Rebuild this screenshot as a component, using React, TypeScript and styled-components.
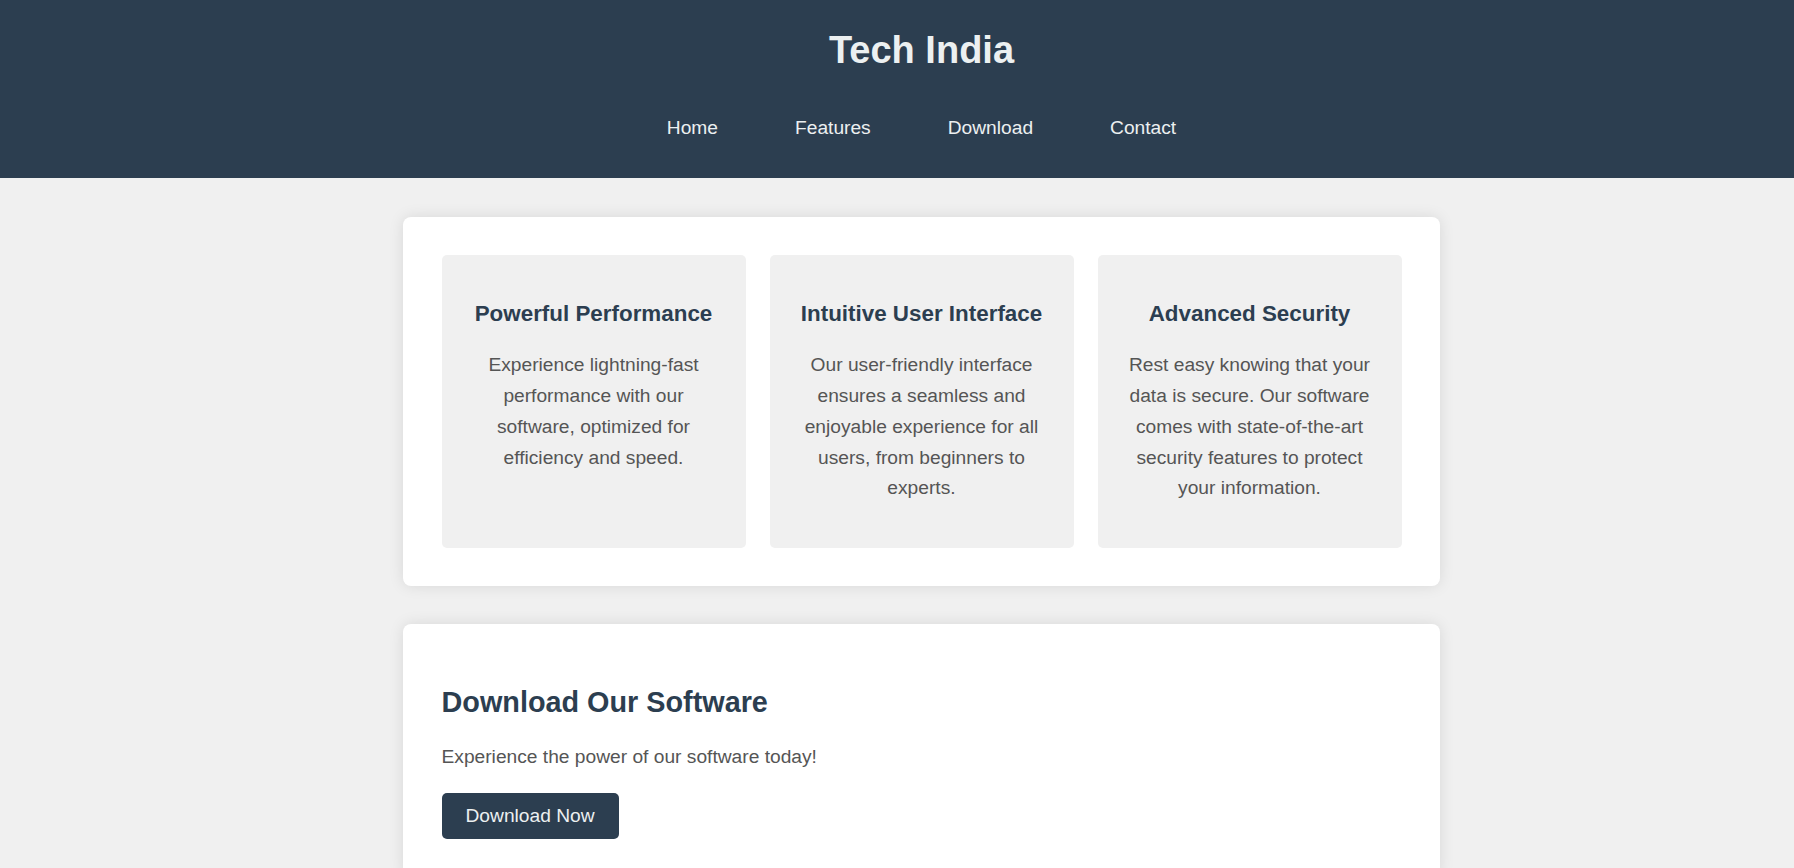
import React from "react";
import styled, { createGlobalStyle } from "styled-components";

const GlobalStyle = createGlobalStyle`
  html, body {
    margin: 0;
    padding: 0;
  }
  body {
    background: #f0f0f0;
    font-family: "Liberation Sans", Arial, sans-serif;
    color: #444;
  }
`;

const Header = styled.header`
  width: 100%;
  box-sizing: content-box;
  padding: 27px 24.5px 39px;
  background: #2c3e50;
  display: flex;
  flex-direction: column;
  align-items: center;
`;

const Title = styled.h1`
  margin: 0;
  font-size: 38px;
  line-height: 46px;
  font-weight: 700;
  color: #ecf0f1;
`;

const Nav = styled.nav`
  margin-top: 44px;
  display: flex;
  gap: 77px;
`;

const NavLink = styled.a`
  font-size: 19.2px;
  line-height: 22px;
  color: #ecf0f1;
  text-decoration: none;
`;

const Main = styled.main`
  width: 100%;
  box-sizing: content-box;
  padding: 39px 24.5px;
  display: flex;
  flex-direction: column;
  align-items: center;
  gap: 38px;
`;

const Card = styled.section`
  width: 960px;
  padding: 38.4px;
  background: #fff;
  border-radius: 8px;
  box-shadow: 0 0 15px rgba(0, 0, 0, 0.1);
`;

const FeatureGrid = styled.div`
  display: grid;
  grid-template-columns: repeat(3, 1fr);
  gap: 24px;
`;

const Feature = styled.div`
  background: #f0f0f0;
  border-radius: 5px;
  padding: 24px 24px 25px;
  text-align: center;
`;

const FeatureTitle = styled.h3`
  margin: 22px 0 23px;
  font-size: 22.4px;
  line-height: 26px;
  font-weight: 700;
  color: #2c3e50;
`;

const Text = styled.p<{ $gap?: number }>`
  margin: 0 0 ${(p) => p.$gap ?? 19}px;
  font-size: 19.2px;
  line-height: 1.6;
  color: #555;
`;

const SectionTitle = styled.h2`
  margin: 23px 0 23px;
  font-size: 28.8px;
  line-height: 33px;
  font-weight: 700;
  color: #2c3e50;
`;

const Button = styled.button`
  display: inline-block;
  padding: 12px 24px;
  font-family: "Liberation Sans", Arial, sans-serif;
  font-size: 19.2px;
  line-height: 22px;
  color: #ecf0f1;
  background: #2c3e50;
  border: none;
  border-radius: 5px;
  cursor: pointer;
`;

const features = [
  {
    title: "Powerful Performance",
    text: "Experience lightning-fast performance with our software, optimized for efficiency and speed.",
  },
  {
    title: "Intuitive User Interface",
    text: "Our user-friendly interface ensures a seamless and enjoyable experience for all users, from beginners to experts.",
  },
  {
    title: "Advanced Security",
    text: "Rest easy knowing that your data is secure. Our software comes with state-of-the-art security features to protect your information.",
  },
];

export default function App() {
  return (
    <>
      <GlobalStyle />
      <Header>
        <Title>Tech India</Title>
        <Nav>
          <NavLink href="#home">Home</NavLink>
          <NavLink href="#features">Features</NavLink>
          <NavLink href="#download">Download</NavLink>
          <NavLink href="#contact">Contact</NavLink>
        </Nav>
      </Header>
      <Main>
        <Card id="features">
          <FeatureGrid>
            {features.map((f) => (
              <Feature key={f.title}>
                <FeatureTitle>{f.title}</FeatureTitle>
                <Text>{f.text}</Text>
              </Feature>
            ))}
          </FeatureGrid>
        </Card>
        <Card id="download">
          <SectionTitle>Download Our Software</SectionTitle>
          <Text $gap={21}>Experience the power of our software today!</Text>
          <Button>Download Now</Button>
        </Card>
      </Main>
    </>
  );
}
